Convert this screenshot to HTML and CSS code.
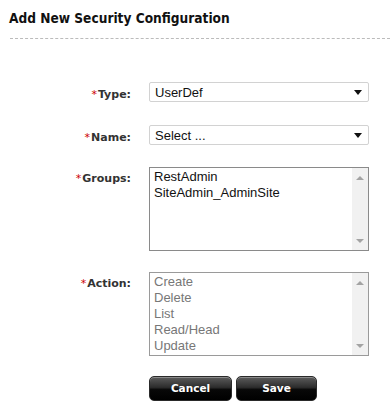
FILE: index.html
```html
<!DOCTYPE html>
<html lang="en">
    <head>
        <title>Add New Security Configuration</title>
        <link rel="stylesheet" href="styles.css">
    </head>
    <body>
        <div id="main">
            <h2 class="title">Add New Security Configuration</h2>
            <div class="divider"></div>

            <div class="form">
                <div class="row row-select" id="type-row">
                    <div class="label"><span class="req">*</span>Type:</div>
                    <div class="select">
                        <span>UserDef</span>
                        <span class="caret"></span>
                    </div>
                </div>

                <div class="row row-select" id="name-row">
                    <div class="label"><span class="req">*</span>Name:</div>
                    <div class="select">
                        <span>Select ...</span>
                        <span class="caret"></span>
                    </div>
                </div>

                <div class="row row-list" id="groups-row">
                    <div class="label"><span class="req">*</span>Groups:</div>
                    <div class="listbox">
                        <div class="options">
                            <div>RestAdmin</div>
                            <div>SiteAdmin_AdminSite</div>
                        </div>
                        <div class="scrollbar">
                            <span class="arrow-up"></span>
                            <span class="arrow-down"></span>
                        </div>
                    </div>
                </div>

                <div class="row row-list" id="action-row">
                    <div class="label"><span class="req">*</span>Action:</div>
                    <div class="listbox listbox-disabled">
                        <div class="options">
                            <div>Create</div>
                            <div>Delete</div>
                            <div>List</div>
                            <div>Read/Head</div>
                            <div>Update</div>
                        </div>
                        <div class="scrollbar">
                            <span class="arrow-up"></span>
                            <span class="arrow-down"></span>
                        </div>
                    </div>
                </div>

                <div class="row">
                    <div></div>
                    <div class="buttons">
                        <div class="btn" id="cancel">Cancel</div>
                        <div class="btn" id="save">Save</div>
                    </div>
                </div>
            </div>
        </div>
    </body>
</html>
```

FILE: styles.css
```css
*{
    margin: 0px;
    padding: 0px;
    box-sizing: border-box;
}
body{
    background-color: white;
    font-family: "DejaVu Sans", Verdana, sans-serif;
    color: #222;
}

.title{
    font-family: "DejaVu Sans Condensed", "DejaVu Sans", sans-serif;
    font-size: 13.6px;
    font-weight: bold;
    color: #111;
    padding: 10px 0 0 9px;
    height: 38px;
}
.divider{
    margin-left: 10px;
    border-top: 1px dashed #bbb;
}

.form{
    padding-top: 43px;
}
.row{
    display: grid;
    grid-template-columns: 131px 220px;
    column-gap: 18px;
}
#type-row{
    margin-bottom: 23px;
}
#name-row{
    margin-bottom: 22px;
}
#groups-row{
    margin-bottom: 21px;
}
#action-row{
    margin-bottom: 20px;
}
.row-select{
    align-items: center;
}

.label{
    text-align: right;
    font-size: 11px;
    font-weight: bold;
    color: #333;
}
.row-select .label{
    padding-top: 4px;
}
.row-list .label{
    padding-top: 5px;
}
.req{
    color: #cc0000;
    font-weight: normal;
    margin-right: 1px;
}

.select{
    height: 20px;
    border: 1px solid #d2d2d2;
    border-radius: 2px;
    display: flex;
    align-items: center;
    justify-content: space-between;
    padding: 0 4px 0 5px;
    font-family: "Liberation Sans", Arial, sans-serif;
    font-size: 13px;
    color: #111;
}
.caret{
    width: 0;
    height: 0;
    border-left: 4px solid transparent;
    border-right: 4px solid transparent;
    border-top: 5px solid #111;
    margin-right: 2px;
}

.listbox{
    height: 84px;
    border: 1px solid #8a8a8a;
    display: flex;
    font-family: "Liberation Sans", Arial, sans-serif;
    font-size: 13px;
    line-height: 16px;
    color: #111;
}
.listbox-disabled{
    border-color: #9a9a9a;
    color: #777;
}
.options{
    flex: 1;
    padding: 1px 0 0 4px;
    overflow: hidden;
}
.scrollbar{
    width: 16px;
    background-color: #f1f1f1;
    display: flex;
    flex-direction: column;
    justify-content: space-between;
    align-items: center;
    padding: 8px 0 7px;
}
.arrow-up{
    border-left: 4px solid transparent;
    border-right: 4px solid transparent;
    border-bottom: 4px solid #a3a3a3;
}
.arrow-down{
    border-left: 4px solid transparent;
    border-right: 4px solid transparent;
    border-top: 4px solid #a3a3a3;
}

.buttons{
    display: flex;
    gap: 4px;
}
.btn{
    height: 25px;
    border: 1px solid #2a2a2a;
    border-radius: 5px;
    background: linear-gradient(#5c5c5c, #2c2c2c 45%, #080808 55%, #000);
    box-shadow: inset 0 1px 0 #8a8a8a;
    color: white;
    font-size: 10.5px;
    font-weight: bold;
    text-align: center;
    line-height: 23px;
    cursor: pointer;
}
#cancel{
    width: 83px;
}
#save{
    width: 81px;
}
```
